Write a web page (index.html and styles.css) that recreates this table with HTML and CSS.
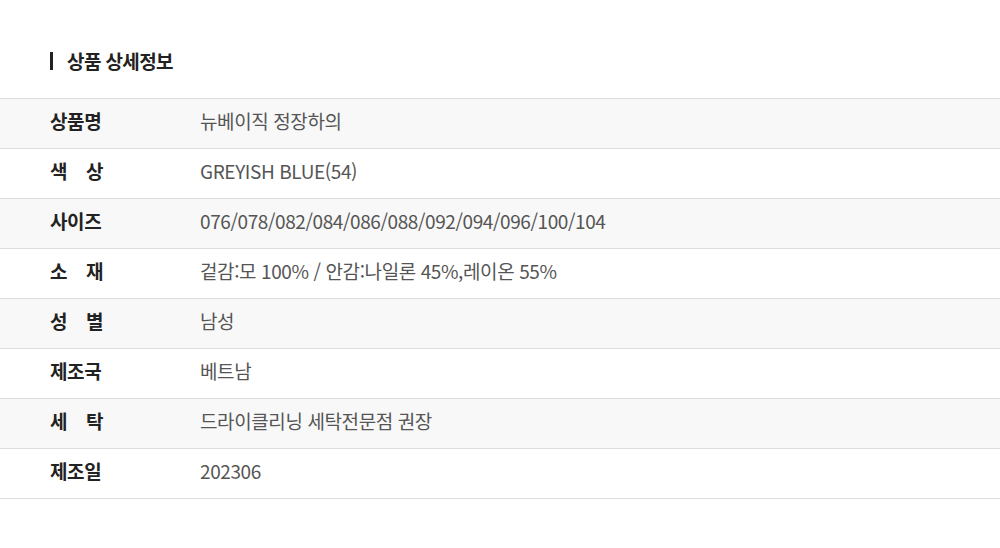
FILE: index.html
```html
<html lang="ko">
<head>
  <meta charset="UTF-8">
  <meta name="viewport" content="width=device-width, initial-scale=1.0">
  <title>상품 상세정보</title>
  <link rel="stylesheet" href="styles.css">
</head>
<body>
  <section class="detail">
    <h2 class="detail-title">상품 상세정보</h2>
    <table class="info">
      <tr class="odd"><th><span>상품명</span></th><td>뉴베이직 정장하의</td></tr>
      <tr><th><span>색 상</span></th><td>GREYISH BLUE(54)</td></tr>
      <tr class="odd"><th><span>사이즈</span></th><td>076/078/082/084/086/088/092/094/096/100/104</td></tr>
      <tr><th><span>소 재</span></th><td>겉감:모 100% / 안감:나일론 45%,레이온 55%</td></tr>
      <tr class="odd"><th><span>성 별</span></th><td>남성</td></tr>
      <tr><th><span>제조국</span></th><td>베트남</td></tr>
      <tr class="odd"><th><span>세 탁</span></th><td>드라이클리닝 세탁전문점 권장</td></tr>
      <tr><th><span>제조일</span></th><td>202306</td></tr>
    </table>
  </section>
</body>
</html>
```

FILE: styles.css
```css
* { box-sizing: border-box; margin: 0; padding: 0; }
body {
  font-family: "Noto Sans CJK KR", "Noto Sans", sans-serif;
  background: #fff;
  color: #222;
}
.detail {
  padding-top: 52px;
}
.detail-title {
  margin-left: 50px;
  padding-left: 14px;
  border-left: 3px solid #222;
  font-size: 19px;
  font-weight: 700;
  line-height: 18px;
  height: 18px;
  letter-spacing: -0.6px;
  margin-bottom: 28px;
}
.info {
  width: 100%;
  border-collapse: collapse;
  border-top: 1px solid #ddd;
}
.info tr {
  height: 50px;
  border-bottom: 1px solid #ddd;
}
.info tr.odd { background: #f8f8f8; }
.info th,
.info td {
  font-size: 19px;
  line-height: 24px;
  padding-bottom: 6px;
  white-space: nowrap;
}
.info th {
  width: 200px;
  padding-left: 50px;
  text-align: left;
  font-weight: 700;
  color: #222;
}
.info th span {
  display: inline-block;
  width: 53px;
  text-align: justify;
  text-align-last: justify;
  letter-spacing: -0.4px;
}
.info td {
  font-weight: 400;
  color: #555;
  letter-spacing: -0.4px;
}
```
